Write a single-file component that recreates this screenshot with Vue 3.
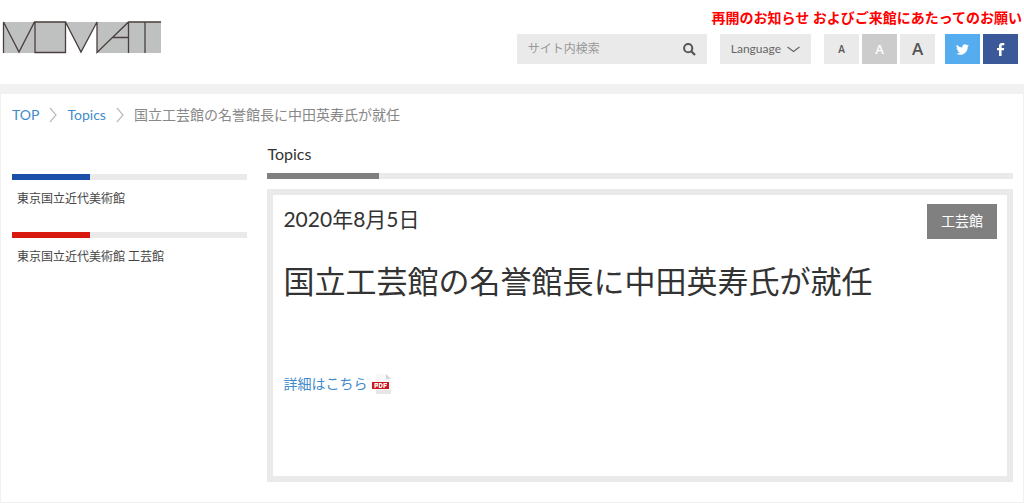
<script setup>
const crumbs = [
  { label: 'TOP', href: '#top' },
  { label: 'Topics', href: '#topics' },
]
const museums = [
  { name: '東京国立近代美術館', tone: 'blue' },
  { name: '東京国立近代美術館 工芸館', tone: 'red' },
]
const sizes = [
  { name: 'small', label: '文字サイズ 小' },
  { name: 'medium', label: '文字サイズ 中' },
  { name: 'large', label: '文字サイズ 大' },
]
</script>

<template>
  <div class="page">
    <header class="header">
      <a class="logo" href="#top" aria-label="MOMAT">
        <svg width="160" height="33" viewBox="0 0 160 33">
          <path fill="#bfc1c0" d="M1 1H159V32H95V1L79 32L63 1V32H1Z" />
          <path
            fill="none"
            stroke="#4a3f3e"
            stroke-width="1.3"
            d="M1.500 32V1L17 31L32.500 1H63.500V31.500H33V1M63.500 1L79 31L95 1V31.500L126.500 1H159M126.500 1V32M143 1V32M111 16.500H126.500"
          />
        </svg>
      </a>
      <div class="header-side">
        <a class="notice" href="#notice">再開のお知らせ およびご来館にあたってのお願い</a>
        <div class="tools">
          <form class="search" @submit.prevent>
            <input type="text" placeholder="サイト内検索" aria-label="サイト内検索" />
            <button type="submit" aria-label="検索">
              <svg width="13" height="13" viewBox="0 0 13 13" fill="none" stroke="#555">
                <circle cx="5.200" cy="5.200" r="4.100" stroke-width="2" />
                <path d="M8.200 8.200L12 12" stroke-width="2.300" />
              </svg>
            </button>
          </form>
          <button class="language" type="button">
            Language
            <svg width="13" height="7" viewBox="0 0 13 7" fill="none" stroke="#666" stroke-width="1.200">
              <path d="M.5 1L6.500 5.500L12.500 1" />
            </svg>
          </button>
          <div class="sizes">
            <button v-for="s in sizes" :key="s.name" type="button" :class="s.name" :aria-label="s.label">A</button>
          </div>
          <div class="social">
            <a class="twitter" href="#twitter" aria-label="Twitter">
              <svg width="13" height="13" viewBox="0 0 24 24" fill="#fff">
                <path d="M23.950 4.570a10 10 0 0 1-2.820.770 4.960 4.960 0 0 0 2.160-2.720c-.950.550-2 .950-3.130 1.180a4.920 4.920 0 0 0-8.380 4.480C7.690 8.090 4.070 6.130 1.640 3.160a4.920 4.920 0 0 0 1.520 6.570 4.900 4.900 0 0 1-2.230-.610v.060a4.920 4.920 0 0 0 3.950 4.830 5 5 0 0 1-2.210.080 4.940 4.940 0 0 0 4.600 3.420A9.870 9.870 0 0 1 0 19.540a14 14 0 0 0 7.550 2.210c9.050 0 14-7.500 14-13.980v-.640a9.900 9.900 0 0 0 2.400-2.560z" />
              </svg>
            </a>
            <a class="facebook" href="#facebook" aria-label="Facebook">
              <svg width="8" height="13" viewBox="0 0 8 13" fill="#fff">
                <path d="M2 13V7.200H0V4.900H2V3.200C2 1.100 3.200 0 5.100 0H7.300V2.200H5.900C4.900 2.200 4.600 2.700 4.600 3.400V4.900H7.200L6.900 7.200H4.600V13Z" />
              </svg>
            </a>
          </div>
        </div>
      </div>
    </header>

    <div class="panel">
      <nav class="crumbs" aria-label="パンくず">
        <template v-for="c in crumbs" :key="c.label">
          <a :href="c.href">{{ c.label }}</a>
          <svg width="8" height="16" viewBox="0 0 8 16" fill="none" stroke="#bbb" stroke-width="1.200">
            <path d="M1 1L7 8L1 15" />
          </svg>
        </template>
        <span>国立工芸館の名誉館長に中田英寿氏が就任</span>
      </nav>

      <div class="columns">
        <aside class="sidebar">
          <section v-for="m in museums" :key="m.name">
            <div class="rule" :class="m.tone"></div>
            <a href="#museum">{{ m.name }}</a>
          </section>
        </aside>

        <main class="main">
          <h2>Topics</h2>
          <div class="rule grey"></div>
          <article>
            <div class="meta">
              <time datetime="2020-08-05">2020年8月5日</time>
              <span class="tag">工芸館</span>
            </div>
            <h1>国立工芸館の名誉館長に中田英寿氏が就任</h1>
            <a class="detail" href="#pdf">
              詳細はこちら
              <svg width="20" height="20" viewBox="0 0 20 20" aria-label="PDF">
                <path fill="#f8f8f8" d="M4 0H14L19 5V20H4Z" />
                <path fill="#e6e6e6" d="M4 16H19V20H4Z" />
                <path fill="#d5d5d5" d="M14 0L19 5H14Z" />
                <path fill="#c9171e" d="M0 8H17V15H0Z" />
                <path fill="none" stroke="#fff" stroke-width="1.200" d="M3 14V9.600H5.300V11.900H3M7.300 9.600H9L10 10.500V12.500L9 13.400H7.300ZM12 14V9.600H15M12 11.700H14.500" />
              </svg>
            </a>
          </article>
        </main>
      </div>
    </div>
  </div>
</template>

<style>
body {
  margin: 0;
  background: #fff;
}
</style>

<style scoped>
.page {
  font-family: Lato, "Noto Sans CJK JP", sans-serif;
  font-size: 14px;
  line-height: 20px;
  color: #333;
}
a {
  color: #428bca;
  text-decoration: none;
}
button,
input {
  border: 0;
  border-radius: 0;
  padding: 0;
  background: none;
  font: inherit;
}
svg {
  display: block;
  flex: none;
}
.header {
  display: flex;
  justify-content: space-between;
  padding: 8px 2px 20px;
  border-bottom: 10px solid #f1f1f1;
}
.logo {
  padding-top: 13px;
}
.header-side {
  display: flex;
  flex-direction: column;
  align-items: flex-end;
  gap: 6px;
}
.notice {
  color: #f00;
  font-weight: 700;
}
.tools {
  display: flex;
  margin-right: 4px;
  height: 30px;
}
.search {
  display: flex;
  align-items: center;
  width: 190px;
  box-sizing: border-box;
  padding: 0 11px;
  margin-right: 13px;
  background: #eaeaea;
}
.search input {
  flex: 1;
  min-width: 0;
  font-size: 12px;
  color: #555;
}
.search input::placeholder {
  color: #999;
  opacity: 1;
}
.language {
  display: flex;
  align-items: center;
  gap: 6px;
  padding: 0 11px;
  margin-right: 13px;
  background: #eaeaea;
  color: #666;
  font-size: 12px;
}
.sizes,
.social {
  display: flex;
  gap: 3px;
}
.sizes {
  margin-right: 10px;
}
.sizes button {
  width: 35px;
  background: #eaeaea;
  color: #555;
  font-family: "Open Sans", sans-serif;
  font-weight: 600;
}
.sizes .small {
  font-size: 10px;
}
.sizes .medium {
  background: #ccc;
  color: #fff;
  font-size: 13px;
}
.sizes .large {
  font-size: 17px;
}
.social a {
  display: flex;
  align-items: center;
  justify-content: center;
  width: 35px;
}
.twitter {
  background: #55acee;
}
.facebook {
  background: #3b5998;
}
.panel {
  border: 1px solid #f1f1f1;
  border-top: 0;
  padding: 11px 10px 20px 11px;
}
.crumbs {
  display: flex;
  align-items: center;
  gap: 10px;
  color: #888;
}
.columns {
  display: grid;
  grid-template-columns: 6fr 19fr;
  column-gap: 20px;
  margin-top: 19px;
}
.sidebar {
  padding-top: 30px;
}
.sidebar section {
  margin-bottom: 23px;
}
.sidebar a {
  display: block;
  padding: 9px 5px 0;
  color: #444;
  font-size: 12px;
}
.rule {
  height: 6px;
  background: #eaeaea;
}
.rule::before {
  content: "";
  display: block;
  width: 33%;
  height: 100%;
}
.blue::before {
  background: #1b4fa8;
}
.red::before {
  background: #d7190f;
}
.grey::before {
  width: 15%;
  background: #808080;
}
h2 {
  margin: 0 0 9px;
  font-size: 16px;
  font-weight: 400;
  line-height: 20px;
}
article {
  min-height: 263px;
  margin-top: 10px;
  padding: 9px 10px;
  border: 6px solid #eaeaea;
}
.meta {
  display: flex;
  align-items: flex-start;
  justify-content: space-between;
}
time {
  font-size: 21px;
  line-height: 30px;
}
.tag {
  padding: 7px 14px 8px;
  background: #808080;
  color: #fff;
}
h1 {
  margin: 22px 0 73px;
  font-size: 31px;
  font-weight: 400;
  line-height: 40px;
}
.detail {
  display: inline-flex;
  align-items: center;
  gap: 5px;
}
</style>
